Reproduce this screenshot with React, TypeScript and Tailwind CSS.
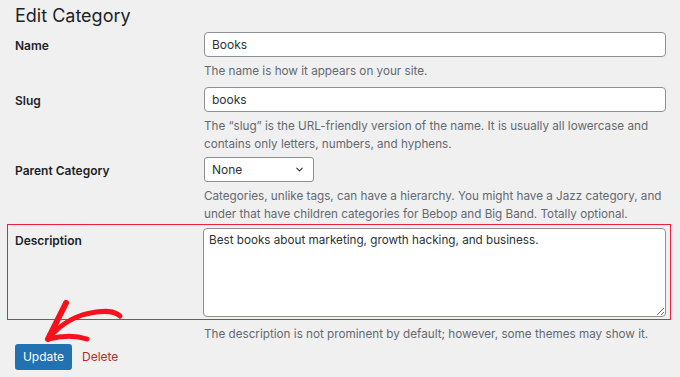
import { ChevronDown } from "lucide-react";

const font = { fontFamily: "Inter, 'Liberation Sans', sans-serif" };

function Row({
	label,
	children,
	help,
	className = "",
}: {
	label: string;
	children: React.ReactNode;
	help?: React.ReactNode;
	className?: string;
}) {
	return (
		<div className={`flex ${className}`}>
			<div className="w-[189px] shrink-0 pt-[5px] text-[12px] leading-[18px] font-semibold text-[#1d2327]">
				{label}
			</div>
			<div className="flex-1">
				{children}
				{help && (
					<p className="mt-[5px] text-[11.7px] leading-[18px] text-[#646970]">{help}</p>
				)}
			</div>
		</div>
	);
}

export default function App() {
	return (
		<div
			className="relative w-[680px] h-[377px] overflow-hidden bg-[#f0f0f1] pl-[15px] pr-[14px]"
			style={font}
		>
			<h1 className="pt-[4px] text-[18px] leading-[24px] text-[#1d2327]">Edit Category</h1>

			{/* Name */}
			<Row label="Name" className="mt-[4px]" help="The name is how it appears on your site.">
				<div className="h-[25px] rounded-[4px] border border-[#8c8f94] bg-white px-[7px] text-[12px] leading-[23px] text-[#2c3338]">
					Books
				</div>
			</Row>

			{/* Slug */}
			<Row
				label="Slug"
				className="mt-[7px]"
				help="The “slug” is the URL-friendly version of the name. It is usually all lowercase and contains only letters, numbers, and hyphens."
			>
				<div className="h-[25px] rounded-[4px] border border-[#8c8f94] bg-white px-[7px] text-[12px] leading-[23px] text-[#2c3338]">
					books
				</div>
			</Row>

			{/* Parent */}
			<Row
				label="Parent Category"
				className="mt-[4px]"
				help="Categories, unlike tags, can have a hierarchy. You might have a Jazz category, and under that have children categories for Bebop and Big Band. Totally optional."
			>
				<div className="flex h-[25px] w-[110px] items-center justify-between rounded-[3px] border border-[#8c8f94] bg-white pl-[7px] pr-[8px] text-[12px] text-[#2c3338]">
					<span>None</span>
					<ChevronDown className="h-[11px] w-[11px] text-[#2c3338]" strokeWidth={2.5} />
				</div>
			</Row>

			{/* Description, outlined */}
			<div className="mt-[1px] ml-[-8px] flex w-[664px] border border-[#f0203c] pt-[3px] pb-[2px] pl-[7px] pr-[4px]">
				<div className="w-[188px] shrink-0 pt-[4px] text-[12px] leading-[18px] font-semibold text-[#1d2327]">
					Description
				</div>
				<textarea
					readOnly
					defaultValue="Best books about marketing, growth hacking, and business."
					className="h-[89px] flex-1 rounded-[4px] border border-[#8c8f94] bg-white px-[5px] py-[2px] text-[11.7px] leading-[18px] text-[#2c3338] outline-none"
					style={font}
				/>
			</div>
			<p className="mt-[5px] ml-[189px] text-[11.7px] leading-[18px] text-[#646970]">
				The description is not prominent by default; however, some themes may show it.
			</p>

			<div className="mt-[1px] flex items-center gap-[10px]">
				<button
					type="button"
					className="h-[26px] w-[57px] rounded-[3px] bg-[#2271b1] text-[12px] text-white"
				>
					Update
				</button>
				<span className="text-[12px] text-[#b32d2e]">Delete</span>
			</div>

			{/* hand-drawn arrow */}
			<svg
				className="pointer-events-none absolute left-[38px] top-[296px]"
				width="90"
				height="50"
				viewBox="38 296 90 50"
				fill="none"
				stroke="#f8101c"
				strokeLinecap="round"
				strokeLinejoin="round"
			>
				<path d="M120 316 C114 310 104 311 96 312 C80 314 62 322 49 338" strokeWidth="5" />
				<path d="M66 303 C60 315 54 327 48 339" strokeWidth="6" />
				<path d="M48 339 C60 336 75 335 87 339" strokeWidth="5" />
			</svg>
		</div>
	);
}
